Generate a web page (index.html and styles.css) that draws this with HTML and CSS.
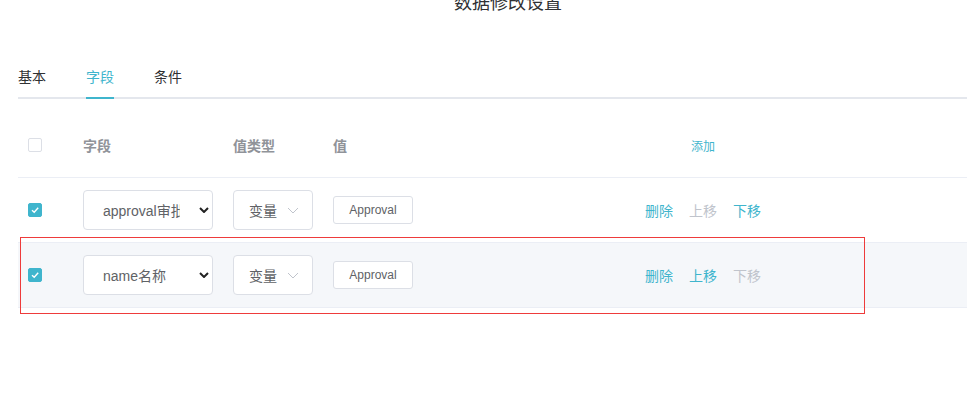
FILE: index.html
```html
<!DOCTYPE html>
<html lang="zh">
<head>
<meta charset="utf-8">
<title>数据修改设置</title>
<link rel="stylesheet" href="styles.css">
</head>
<body>
<div class="page">
  <div class="title">数据修改设置</div>
  <div class="tabs">
    <div class="tab">基本</div>
    <div class="tab active">字段</div>
    <div class="tab">条件</div>
  </div>
  <div class="table">
    <div class="row head">
      <div class="cell"><span class="checkbox"></span></div>
      <div class="cell">字段</div>
      <div class="cell">值类型</div>
      <div class="cell">值</div>
      <div class="cell actions"><span class="link">添加</span></div>
      <div class="cell"></div>
    </div>
    <div class="row">
      <div class="cell"><span class="checkbox checked"><svg viewBox="0 0 14 14" width="14" height="14"><path d="M4 7.2 L6.2 9.2 L10.2 4.8" fill="none" stroke="#fff" stroke-width="1.4"/></svg></span></div>
      <div class="cell"><div class="native-select"><span class="val">approval审批</span><svg class="chev" viewBox="0 0 10 6" width="10" height="6"><path d="M1 1 L5 5 L9 1" fill="none" stroke="#222" stroke-width="2"/></svg></div></div>
      <div class="cell"><div class="el-select"><span>变量</span><svg viewBox="0 0 12 7" width="12" height="7"><path d="M1 1 L6 6 L11 1" fill="none" stroke="#c0c4cc" stroke-width="1"/></svg></div></div>
      <div class="cell"><button class="btn">Approval</button></div>
      <div class="cell actions"><span class="link">删除</span><span class="link disabled">上移</span><span class="link">下移</span></div>
      <div class="cell"></div>
    </div>
    <div class="row hover">
      <div class="cell"><span class="checkbox checked"><svg viewBox="0 0 14 14" width="14" height="14"><path d="M4 7.2 L6.2 9.2 L10.2 4.8" fill="none" stroke="#fff" stroke-width="1.4"/></svg></span></div>
      <div class="cell"><div class="native-select"><span class="val">name名称</span><svg class="chev" viewBox="0 0 10 6" width="10" height="6"><path d="M1 1 L5 5 L9 1" fill="none" stroke="#222" stroke-width="2"/></svg></div></div>
      <div class="cell"><div class="el-select"><span>变量</span><svg viewBox="0 0 12 7" width="12" height="7"><path d="M1 1 L6 6 L11 1" fill="none" stroke="#c0c4cc" stroke-width="1"/></svg></div></div>
      <div class="cell"><button class="btn">Approval</button></div>
      <div class="cell actions"><span class="link">删除</span><span class="link">上移</span><span class="link disabled">下移</span></div>
      <div class="cell"></div>
    </div>
  </div>
  <div class="annotation"></div>
</div>
</body>
</html>
```
FILE: styles.css
```css
html {
  overflow: hidden;
}
html, body {
  margin: 0;
  padding: 0;
  background: #fff;
}
body {
  font-family: "Liberation Sans", "Noto Sans CJK SC", sans-serif;
  color: #606266;
  font-size: 14px;
}
.page {
  position: relative;
  display: flow-root;
  width: 1016px;
  padding: 0 18px 40px;
  box-sizing: border-box;
}
.title {
  text-align: center;
  font-size: 18px;
  line-height: 24px;
  color: #303133;
  margin-top: -9px;
  height: 24px;
}
.tabs {
  display: flex;
  margin-top: 42px;
  height: 40px;
  border-bottom: 2px solid #e4e7ed;
}
.tab {
  position: relative;
  padding: 0 20px;
  line-height: 41px;
  font-size: 14px;
  color: #303133;
}
.tab:first-child { padding-left: 0; }
.tab.active { color: #3fb5cd; }
.tab.active::after {
  content: "";
  position: absolute;
  left: 20px;
  right: 20px;
  bottom: -2px;
  height: 2px;
  background: #3fb5cd;
}
.table {
  margin-top: 14px;
}
.row {
  display: grid;
  grid-template-columns: 55px 150px 100px 311px 138px 1fr;
  height: 64px;
  border-bottom: 1px solid #ebeef5;
  align-items: center;
}
.row.hover { background: #f5f7fa; }
.row.head .cell {
  color: #909399;
  font-weight: bold;
}
.cell {
  padding: 0 10px;
  display: flex;
  align-items: center;
}
.checkbox {
  width: 14px;
  height: 14px;
  box-sizing: border-box;
  border: 1px solid #dcdfe6;
  border-radius: 2px;
  background: #fff;
  display: block;
}
.checkbox.checked {
  background: #3fb5cd;
  border-color: #3fb5cd;
  position: relative;
}
.checkbox.checked svg {
  position: absolute;
  left: -1px;
  top: -1px;
}
.native-select {
  width: 130px;
  height: 40px;
  box-sizing: border-box;
  border: 1px solid #dcdfe6;
  border-radius: 4px;
  background: #fff;
  display: flex;
  align-items: center;
  padding: 0 3px 0 19px;
  color: #606266;
  font-size: 14px;
}
.native-select .val {
  width: 77px;
  overflow: hidden;
  white-space: nowrap;
}
.native-select .chev { margin-left: auto; }
.el-select {
  width: 80px;
  height: 40px;
  box-sizing: border-box;
  border: 1px solid #dcdfe6;
  border-radius: 4px;
  background: #fff;
  display: flex;
  align-items: center;
  justify-content: space-between;
  padding: 0 13px 0 15px;
  color: #606266;
  font-size: 14px;
}
.btn {
  width: 80px;
  height: 28px;
  box-sizing: border-box;
  border: 1px solid #dcdfe6;
  border-radius: 3px;
  background: #fff;
  color: #606266;
  font-family: "Liberation Sans", "Noto Sans CJK SC", sans-serif;
  font-size: 12px;
  padding: 0;
}
.actions {
  justify-content: center;
  gap: 16px;
}
.row.head .actions .link {
  font-weight: normal;
  font-size: 12px;
  color: #3fb5cd;
}
.link { color: #3fb5cd; }
.link.disabled { color: #c0c4cc; }
.annotation {
  position: absolute;
  left: 20px;
  top: 237px;
  width: 845px;
  height: 77px;
  box-sizing: border-box;
  border: 1px solid #ee3b3b;
}
```
